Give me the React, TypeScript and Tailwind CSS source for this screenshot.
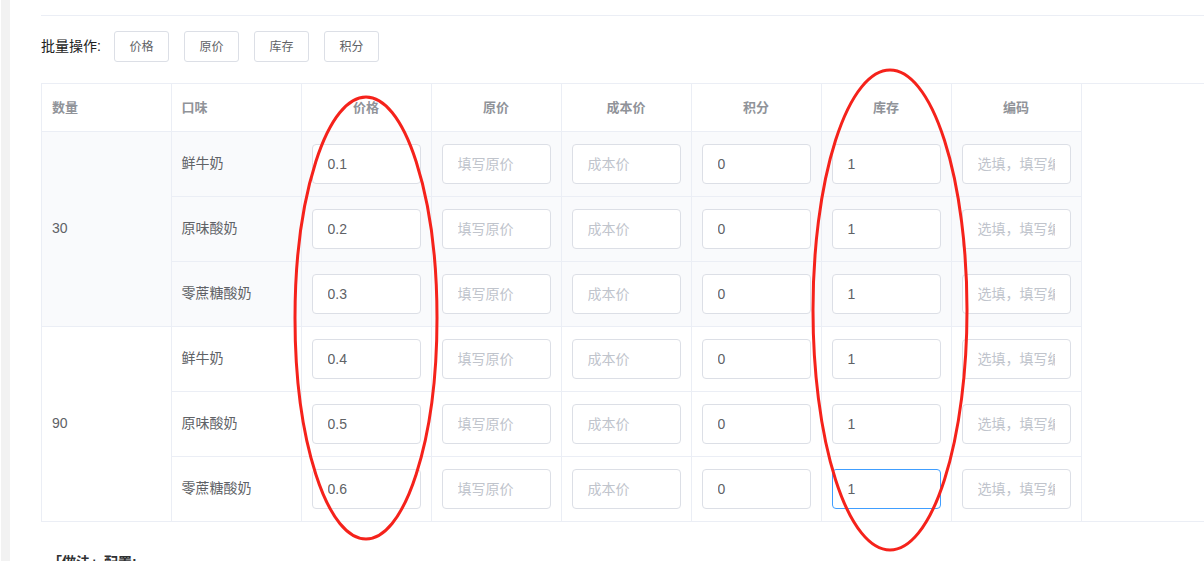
import React from 'react';

type Row = {
  flavor: string;
  price: string;
  points: string;
  stock: string;
};

type Group = {
  qty: string;
  rows: Row[];
  tinted: boolean;
};

const GROUPS: Group[] = [
  {
    qty: '30',
    tinted: true,
    rows: [
      { flavor: '鲜牛奶', price: '0.1', points: '0', stock: '1' },
      { flavor: '原味酸奶', price: '0.2', points: '0', stock: '1' },
      { flavor: '零蔗糖酸奶', price: '0.3', points: '0', stock: '1' },
    ],
  },
  {
    qty: '90',
    tinted: false,
    rows: [
      { flavor: '鲜牛奶', price: '0.4', points: '0', stock: '1' },
      { flavor: '原味酸奶', price: '0.5', points: '0', stock: '1' },
      { flavor: '零蔗糖酸奶', price: '0.6', points: '0', stock: '1' },
    ],
  },
];

const HEADERS = ['价格', '原价', '成本价', '积分', '库存', '编码'];
const BATCH = ['价格', '原价', '库存', '积分'];

function Cell({ value, placeholder, focused }: { value?: string; placeholder?: string; focused?: boolean }) {
  return (
    <td className="h-[65px] w-[130px] border-r border-b border-[#ebeef5] px-[10px]">
      <input
        readOnly
        value={value ?? ''}
        placeholder={placeholder}
        className={
          'block h-[40px] w-[109px] rounded-[4px] border bg-white px-[15px] text-[14px] text-[#606266] outline-none placeholder:text-[#c0c4cc] ' +
          (focused ? 'border-[#409eff]' : 'border-[#dcdfe6]')
        }
      />
    </td>
  );
}

export default function App() {
  return (
    <div
      className="relative flex h-[561px] overflow-hidden bg-white"
      style={{ fontFamily: '"Liberation Sans", "Noto Sans CJK SC", sans-serif' }}
    >
      <div className="w-[10px] shrink-0 border-l border-white bg-[#f2f2f2]" />

      <div className="flex-1 pl-[31px]">
        <div className="h-[16px] border-b border-[#ebeef5]" />

        <div className="mt-[15px] flex items-center">
          <span className="mr-[13px] text-[14px] text-[#222]">批量操作:</span>
          <div className="flex gap-[15px]">
            {BATCH.map((b) => (
              <button
                key={b}
                type="button"
                className="h-[31px] w-[55px] rounded-[3px] border border-[#dcdfe6] bg-white text-[12px] text-[#606266]"
              >
                {b}
              </button>
            ))}
          </div>
        </div>

        <div className="mt-[21px] border-t border-b border-l border-[#ebeef5]">
          <table className="-mb-px border-collapse">
            <thead>
              <tr>
                <th className="h-[47px] w-[129px] border-r border-b border-[#ebeef5] px-[10px] text-left text-[13px] font-bold text-[#909399]">
                  数量
                </th>
                <th className="h-[47px] w-[130px] border-r border-b border-[#ebeef5] px-[10px] text-left text-[13px] font-bold text-[#909399]">
                  口味
                </th>
                {HEADERS.map((h) => (
                  <th
                    key={h}
                    className="h-[47px] w-[130px] border-r border-b border-[#ebeef5] px-[10px] text-center text-[13px] font-bold text-[#909399]"
                  >
                    {h}
                  </th>
                ))}
              </tr>
            </thead>
            <tbody>
              {GROUPS.map((g, gi) =>
                g.rows.map((r, ri) => (
                  <tr key={g.qty + r.flavor} className={g.tinted ? 'bg-[#f9fafc]' : 'bg-white'}>
                    {ri === 0 ? (
                      <td
                        rowSpan={g.rows.length}
                        className="w-[129px] border-r border-b border-[#ebeef5] px-[10px] text-[14px] text-[#606266]"
                      >
                        {g.qty}
                      </td>
                    ) : null}
                    <td className="h-[65px] w-[130px] border-r border-b border-[#ebeef5] px-[10px] text-[14px] text-[#606266]">
                      {r.flavor}
                    </td>
                    <Cell value={r.price} />
                    <Cell placeholder="填写原价" />
                    <Cell placeholder="成本价" />
                    <Cell value={r.points} />
                    <Cell value={r.stock} focused={gi === 1 && ri === 2} />
                    <Cell placeholder="选填，填写编码" />
                  </tr>
                )),
              )}
            </tbody>
          </table>
        </div>

        <p className="mt-[30px] pl-[7px] text-[14px] font-bold text-[#303133]">「做法」配置:</p>
      </div>

      <svg className="pointer-events-none absolute inset-0" width="1204" height="561" viewBox="0 0 1204 561">
        <ellipse cx="366" cy="318" rx="71" ry="221" fill="none" stroke="#f5221b" strokeWidth="3" />
        <ellipse cx="890" cy="310" rx="77" ry="240" fill="none" stroke="#f5221b" strokeWidth="3" />
      </svg>
    </div>
  );
}
